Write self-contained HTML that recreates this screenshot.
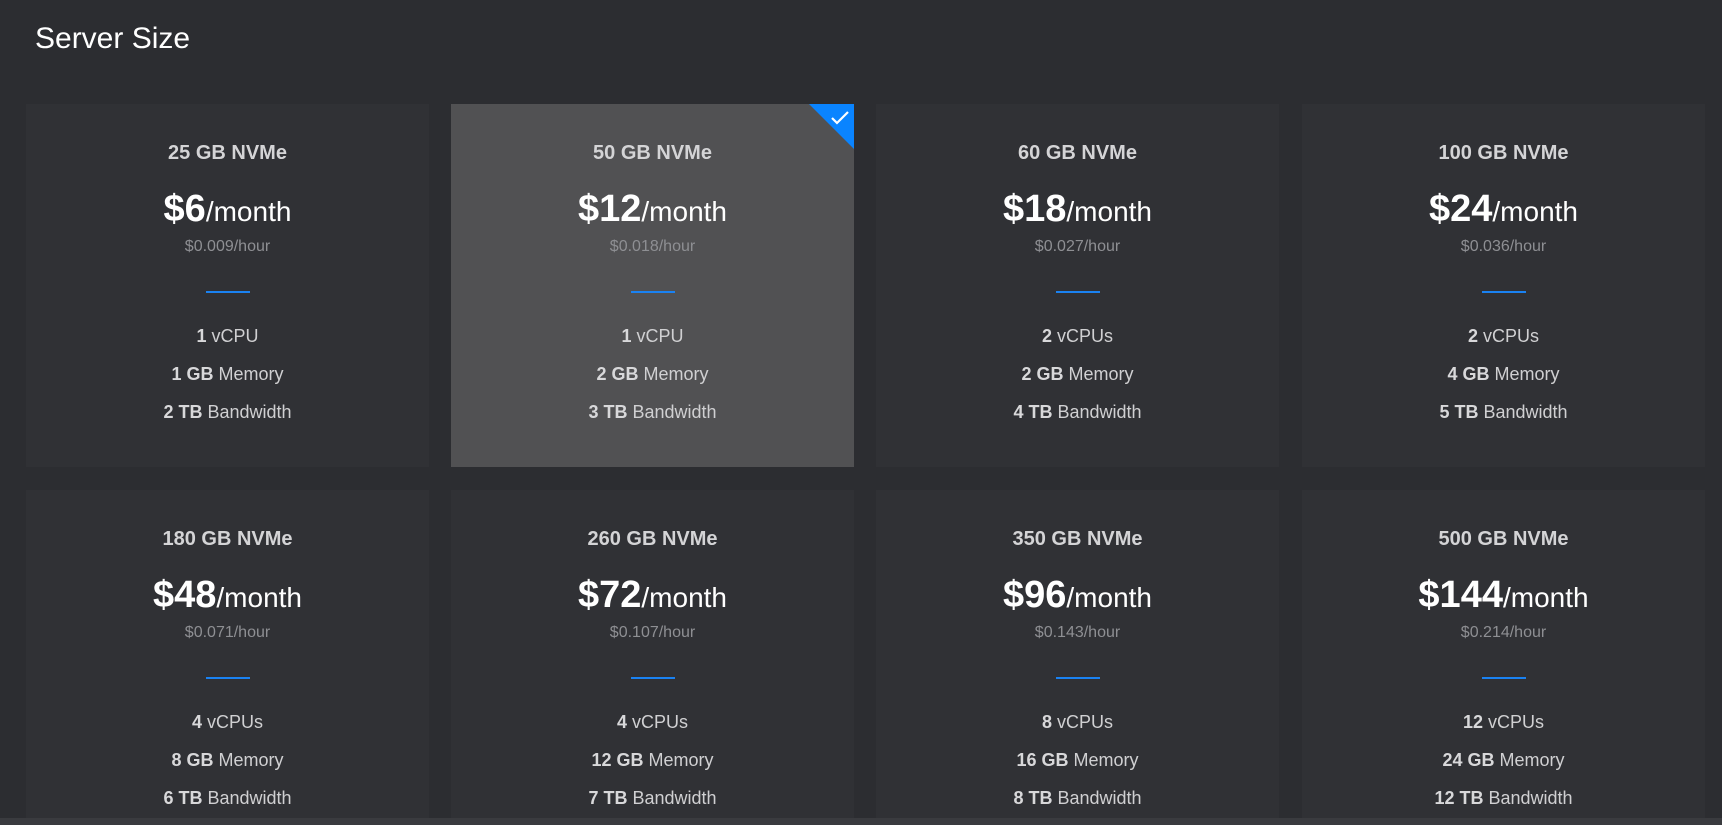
<!DOCTYPE html><html><head><style>
html{overflow:hidden;height:825px}
body{margin:0;width:1722px;height:825px;overflow:hidden;background:#2c2d31;font-family:"Liberation Sans",Arial,sans-serif;position:relative}
h1{position:absolute;left:35px;top:22px;margin:0;font-weight:normal;font-size:30px;color:#fff}
.c{position:absolute;width:403px;height:363px;background:#303135;text-align:center;color:#d0d0d2}
.c.s{background:#515153}
.c.b{height:328px}
.t{position:absolute;top:38px;width:100%;font-weight:bold;font-size:20px;color:#d4d4d6}
.p{position:absolute;top:84px;width:100%;font-size:28px;color:#fff}
.p b{font-size:38px}
.h{position:absolute;top:134px;width:100%;font-size:16px;color:#8e8f93}
.l{position:absolute;top:187px;left:180px;width:44px;height:2px;background:#1a82f2}
.r{position:absolute;width:100%;font-size:18px;color:#d0d0d2}
.r b{color:#d8d8da}
.tri{position:absolute;right:0;top:0;width:0;height:0;border-top:45px solid #0a84ff;border-left:45px solid transparent}
.bar{position:absolute;left:0;top:818px;width:1722px;height:7px;background:#3a3b3f;z-index:5}
</style></head><body>
<h1>Server Size</h1>
<div class="c" style="left:26px;top:104px"><div class="t">25 GB NVMe</div><div class="p"><b>$6</b>/month</div><div class="h">$0.009/hour</div><div class="l"></div><div class="r" style="top:222px"><b>1</b> vCPU</div><div class="r" style="top:260px"><b>1 GB</b> Memory</div><div class="r" style="top:298px"><b>2 TB</b> Bandwidth</div></div>
<div class="c s" style="left:451px;top:104px"><div class="tri"></div><svg style="position:absolute;right:4px;top:6px" width="20" height="16" viewBox="0 0 20 16"><path d="M2 8l5 5L18 2" stroke="#fff" stroke-width="2.2" fill="none"/></svg><div class="t">50 GB NVMe</div><div class="p"><b>$12</b>/month</div><div class="h">$0.018/hour</div><div class="l"></div><div class="r" style="top:222px"><b>1</b> vCPU</div><div class="r" style="top:260px"><b>2 GB</b> Memory</div><div class="r" style="top:298px"><b>3 TB</b> Bandwidth</div></div>
<div class="c" style="left:876px;top:104px"><div class="t">60 GB NVMe</div><div class="p"><b>$18</b>/month</div><div class="h">$0.027/hour</div><div class="l"></div><div class="r" style="top:222px"><b>2</b> vCPUs</div><div class="r" style="top:260px"><b>2 GB</b> Memory</div><div class="r" style="top:298px"><b>4 TB</b> Bandwidth</div></div>
<div class="c" style="left:1302px;top:104px"><div class="t">100 GB NVMe</div><div class="p"><b>$24</b>/month</div><div class="h">$0.036/hour</div><div class="l"></div><div class="r" style="top:222px"><b>2</b> vCPUs</div><div class="r" style="top:260px"><b>4 GB</b> Memory</div><div class="r" style="top:298px"><b>5 TB</b> Bandwidth</div></div>
<div class="c b" style="left:26px;top:490px"><div class="t">180 GB NVMe</div><div class="p"><b>$48</b>/month</div><div class="h">$0.071/hour</div><div class="l"></div><div class="r" style="top:222px"><b>4</b> vCPUs</div><div class="r" style="top:260px"><b>8 GB</b> Memory</div><div class="r" style="top:298px"><b>6 TB</b> Bandwidth</div></div>
<div class="c b" style="left:451px;top:490px"><div class="t">260 GB NVMe</div><div class="p"><b>$72</b>/month</div><div class="h">$0.107/hour</div><div class="l"></div><div class="r" style="top:222px"><b>4</b> vCPUs</div><div class="r" style="top:260px"><b>12 GB</b> Memory</div><div class="r" style="top:298px"><b>7 TB</b> Bandwidth</div></div>
<div class="c b" style="left:876px;top:490px"><div class="t">350 GB NVMe</div><div class="p"><b>$96</b>/month</div><div class="h">$0.143/hour</div><div class="l"></div><div class="r" style="top:222px"><b>8</b> vCPUs</div><div class="r" style="top:260px"><b>16 GB</b> Memory</div><div class="r" style="top:298px"><b>8 TB</b> Bandwidth</div></div>
<div class="c b" style="left:1302px;top:490px"><div class="t">500 GB NVMe</div><div class="p"><b>$144</b>/month</div><div class="h">$0.214/hour</div><div class="l"></div><div class="r" style="top:222px"><b>12</b> vCPUs</div><div class="r" style="top:260px"><b>24 GB</b> Memory</div><div class="r" style="top:298px"><b>12 TB</b> Bandwidth</div></div>
<div class="bar"></div>
</body></html>
